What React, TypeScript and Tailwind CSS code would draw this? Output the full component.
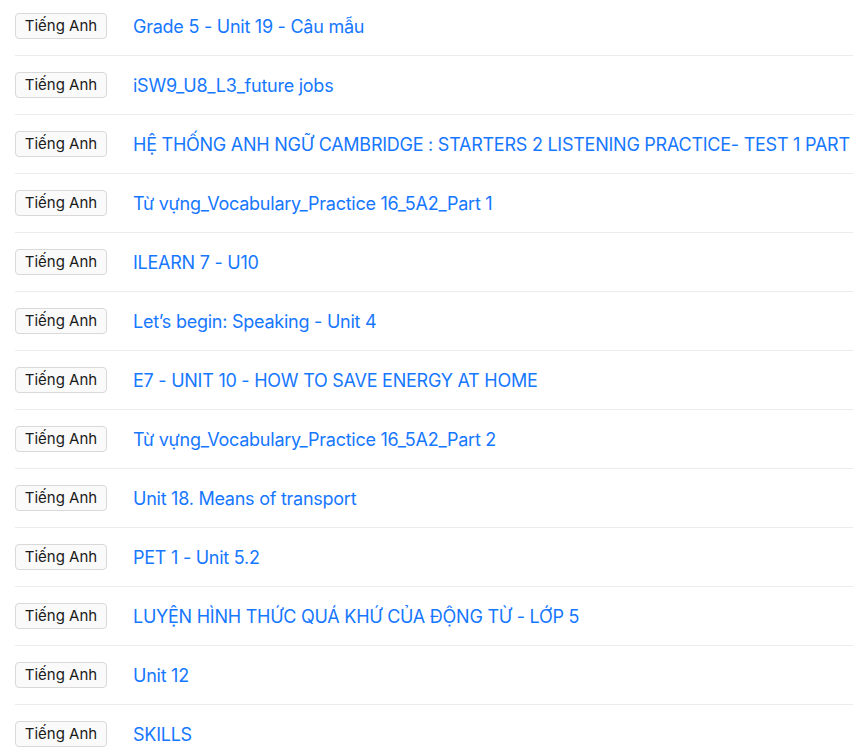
import React from 'react'

const lessons = [
  'Grade 5 - Unit 19 - Câu mẫu',
  'iSW9_U8_L3_future jobs',
  'HỆ THỐNG ANH NGỮ CAMBRIDGE : STARTERS 2 LISTENING PRACTICE- TEST 1 PART 1',
  'Từ vựng_Vocabulary_Practice 16_5A2_Part 1',
  'ILEARN 7 - U10',
  'Let’s begin: Speaking - Unit 4',
  'E7 - UNIT 10 - HOW TO SAVE ENERGY AT HOME',
  'Từ vựng_Vocabulary_Practice 16_5A2_Part 2',
  'Unit 18. Means of transport',
  'PET 1 - Unit 5.2',
  'LUYỆN HÌNH THỨC QUÁ KHỨ CỦA ĐỘNG TỪ - LỚP 5',
  'Unit 12',
  'SKILLS',
]

const App: React.FC = () => {
  return (
    <div
      className="w-[853px] h-[749px] overflow-hidden bg-white"
      style={{ fontFamily: 'Inter, "Noto Sans", sans-serif' }}
    >
      <ul className="ml-[15px] -mt-[3px]">
        {lessons.map((title, i) => (
          <li
            key={i}
            className="flex items-center h-[59px] border-b border-[#ececec] whitespace-nowrap"
          >
            <span className="flex items-center justify-center w-[92px] h-[26px] shrink-0 rounded-[4px] border border-[#d9d9d9] bg-[#fafafa] text-[15px] text-[#1a1a1a]">
              Tiếng Anh
            </span>
            <a href="#" className="ml-[26px] text-[18px] text-[#1677ff] tracking-[-0.25px]">
              {title}
            </a>
          </li>
        ))}
      </ul>
    </div>
  )
}

export default App
